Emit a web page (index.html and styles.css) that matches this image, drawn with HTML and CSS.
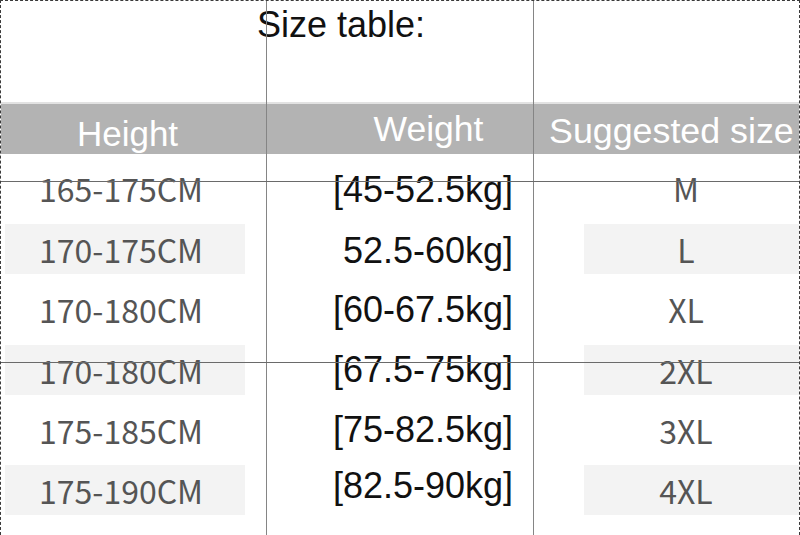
FILE: index.html
```html
<!DOCTYPE html>
<html lang="en">
<head>
<meta charset="utf-8">
<title>Size table</title>
<link rel="stylesheet" href="styles.css">
</head>
<body>
<div class="sheet">
  <div class="title">Size table:</div>
  <div class="header">
    <div class="hc hc-height">Height</div>
    <div class="hc hc-weight">Weight</div>
    <div class="hc hc-size">Suggested size</div>
  </div>
  <div class="rows">
    <div class="row">
      <div class="c-height"><div class="band">165-175CM</div></div>
      <div class="c-weight w-low">[45-52.5kg]</div>
      <div class="c-size"><div class="band">M</div></div>
    </div>
    <div class="row">
      <div class="c-height"><div class="band shade">170-175CM</div></div>
      <div class="c-weight w-low">52.5-60kg]</div>
      <div class="c-size"><div class="band shade">L</div></div>
    </div>
    <div class="row">
      <div class="c-height"><div class="band">170-180CM</div></div>
      <div class="c-weight w-mid">[60-67.5kg]</div>
      <div class="c-size"><div class="band">XL</div></div>
    </div>
    <div class="row">
      <div class="c-height"><div class="band shade">170-180CM</div></div>
      <div class="c-weight">[67.5-75kg]</div>
      <div class="c-size"><div class="band shade">2XL</div></div>
    </div>
    <div class="row">
      <div class="c-height"><div class="band">175-185CM</div></div>
      <div class="c-weight">[75-82.5kg]</div>
      <div class="c-size"><div class="band">3XL</div></div>
    </div>
    <div class="row">
      <div class="c-height"><div class="band shade">175-190CM</div></div>
      <div class="c-weight w-high">[82.5-90kg]</div>
      <div class="c-size"><div class="band shade">4XL</div></div>
    </div>
  </div>
  <div class="grid">
    <div class="vline v1"></div>
    <div class="vline v2"></div>
    <div class="hline h1"></div>
    <div class="hline h2"></div>
  </div>
</div>
</body>
</html>
```
FILE: styles.css
```css
html, body {
  margin: 0;
  padding: 0;
  background: #ffffff;
}
body {
  width: 800px;
  height: 535px;
  overflow: hidden;
}
.sheet {
  position: relative;
  box-sizing: border-box;
  width: 800px;
  height: 535px;
  border: 1px dashed #3a3a3a;
  border-bottom: none;
  overflow: hidden;
}
.title {
  box-sizing: border-box;
  height: 101px;
  padding: 4px 0 0 256px;
  font-family: "Liberation Sans", Arial, sans-serif;
  font-size: 36px;
  line-height: 40px;
  color: #111111;
}
.header {
  display: flex;
  height: 50px;
  border-top: 2px solid #e2e2e2;
  background: #b3b3b3;
  color: #ffffff;
  font-family: "Liberation Sans", Arial, sans-serif;
  font-size: 35px;
  line-height: 40px;
}
.hc {
  box-sizing: border-box;
  white-space: nowrap;
}
.hc-height {
  width: 265px;
  padding: 10px 12px 0 0;
  text-align: center;
}
.hc-weight {
  width: 267px;
  padding: 5px 0 0 58px;
  text-align: center;
  font-size: 35.5px;
}
.hc-size {
  flex: 1;
  padding: 7px 0 0 16px;
  font-size: 35.8px;
}
.rows {
  padding-top: 4.4px;
}
.row {
  display: flex;
  align-items: flex-start;
  height: 60.4px;
}
.band {
  box-sizing: border-box;
  height: 50px;
  margin-top: 5px;
  line-height: 50px;
  font-family: "Noto Sans CJK SC", "Noto Sans", sans-serif;
  font-size: 32px;
  color: #555555;
  white-space: nowrap;
}
.shade {
  background: #f3f3f3;
}
.c-height {
  width: 265px;
}
.c-height .band {
  width: 240px;
  margin-left: 4px;
  padding-left: 34px;
}
.c-weight {
  box-sizing: border-box;
  width: 267px;
  height: 50px;
  margin-top: 5px;
  padding-right: 20px;
  text-align: right;
  line-height: 50px;
  font-family: "Liberation Sans", Arial, sans-serif;
  font-size: 36px;
  color: #111111;
  white-space: nowrap;
}
.w-low {
  margin-top: 7px;
}
.w-mid {
  margin-top: 6px;
}
.w-high {
  margin-top: 1px;
}
.c-size {
  flex: 1;
}
.c-size .band {
  margin-left: 51px;
  padding-right: 11px;
  text-align: center;
}
.grid {
  position: absolute;
  inset: 0;
  pointer-events: none;
}
.vline {
  position: absolute;
  top: 0;
  bottom: 0;
  width: 1px;
  background: #858585;
}
.v1 { left: 265px; }
.v2 { left: 532px; }
.hline {
  position: absolute;
  left: 0;
  right: 0;
  height: 1px;
  background: #6a6a6a;
}
.h1 { top: 180px; }
.h2 { top: 361px; }
```
